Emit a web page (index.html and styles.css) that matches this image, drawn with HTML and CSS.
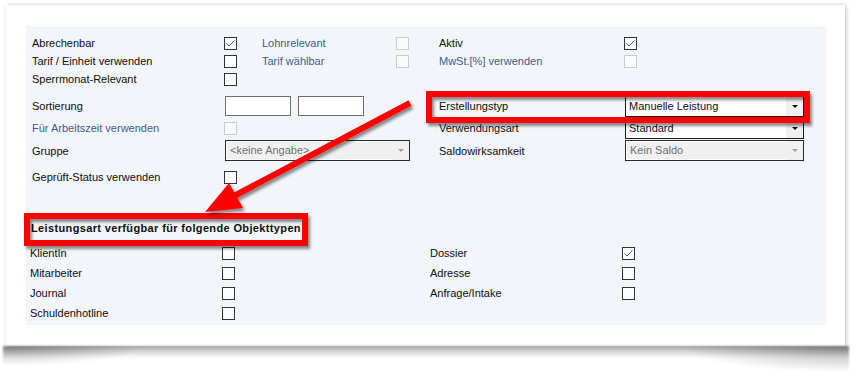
FILE: index.html
```html
<!DOCTYPE html>
<html lang="de">
<head>
<meta charset="utf-8">
<title>Leistungsart</title>
<link rel="stylesheet" href="styles.css">
</head>
<body>
<div class="card">
  <div class="panel">
    <div class="row h18 first">
      <span class="lbl">Abrechenbar</span>
      <span class="cb"><svg class="tick" viewBox="0 0 11 11"><polyline points="1.5,5.5 4,8 9.5,2.5"/></svg></span>
      <span class="lbl dim">Lohnrelevant</span>
      <span class="cb dis"></span>
      <span class="lbl">Aktiv</span>
      <span class="cb"><svg class="tick" viewBox="0 0 11 11"><polyline points="1.5,5.5 4,8 9.5,2.5"/></svg></span>
    </div>
    <div class="row h18">
      <span class="lbl">Tarif / Einheit verwenden</span>
      <span class="cb"></span>
      <span class="lbl dim">Tarif wählbar</span>
      <span class="cb dis"></span>
      <span class="lbl dim">MwSt.[%] verwenden</span>
      <span class="cb dis"></span>
    </div>
    <div class="row h18">
      <span class="lbl">Sperrmonat-Relevant</span>
      <span class="cb"></span>
    </div>
    <div class="row h22 mt7">
      <span class="lbl">Sortierung</span>
      <div class="inputs span-2-5">
        <span class="txt"></span>
        <span class="txt"></span>
      </div>
      <span class="lbl c5">Erstellungstyp</span>
      <div class="combo c6"><span class="val">Manuelle Leistung</span><span class="btn"></span></div>
    </div>
    <div class="row h22">
      <span class="lbl dim">Für Arbeitszeit verwenden</span>
      <span class="cb dis"></span>
      <span class="lbl c5">Verwendungsart</span>
      <div class="combo c6"><span class="val">Standard</span><span class="btn"></span></div>
    </div>
    <div class="row h23">
      <span class="lbl">Gruppe</span>
      <div class="combo off wide span-2-5"><span class="val">&lt;keine Angabe&gt;</span><span class="btn"></span></div>
      <span class="lbl c5">Saldowirksamkeit</span>
      <div class="combo off c6"><span class="val">Kein Saldo</span><span class="btn"></span></div>
    </div>
    <div class="row h30">
      <span class="lbl">Geprüft-Status verwenden</span>
      <span class="cb"></span>
    </div>

    <div class="title">Leistungsart verfügbar für folgende Objekttypen</div>

    <div class="brow bfirst">
      <span class="lbl">KlientIn</span>
      <span class="cb"></span>
      <span class="lbl">Dossier</span>
      <span class="cb"><svg class="tick" viewBox="0 0 11 11"><polyline points="1.5,5.5 4,8 9.5,2.5"/></svg></span>
    </div>
    <div class="brow">
      <span class="lbl">Mitarbeiter</span>
      <span class="cb"></span>
      <span class="lbl">Adresse</span>
      <span class="cb"></span>
    </div>
    <div class="brow">
      <span class="lbl">Journal</span>
      <span class="cb"></span>
      <span class="lbl">Anfrage/Intake</span>
      <span class="cb"></span>
    </div>
    <div class="brow">
      <span class="lbl">Schuldenhotline</span>
      <span class="cb"></span>
    </div>
  </div>
</div>

<svg class="annot" viewBox="0 0 859 375" width="859" height="375">
  <defs>
    <filter id="sh" x="-10%" y="-20%" width="130%" height="160%">
      <feDropShadow dx="2" dy="3" stdDeviation="1.6" flood-color="#000" flood-opacity="0.45"/>
    </filter>
  </defs>
  <g filter="url(#sh)" fill="none" stroke="#ff0000" stroke-width="6">
    <rect x="429" y="94" width="378" height="26"/>
    <rect x="27" y="216" width="278" height="27"/>
  </g>
  <g filter="url(#sh)">
    <line x1="410" y1="103" x2="234" y2="196" stroke="#ff0000" stroke-width="6"/>
    <polygon points="205,212 229,183 243,208" fill="#ff0000"/>
  </g>
</svg>
</body>
</html>
```

FILE: styles.css
```css
html, body {
  margin: 0;
}

body {
  position: relative;
  width: 859px;
  height: 375px;
  overflow: hidden;
  box-sizing: border-box;
  padding: 5px 0 0 6px;
  background: #ffffff;
  font-family: "Liberation Sans", Arial, sans-serif;
  font-size: 11px;
  color: #0e0e0e;
}

.card {
  position: relative;
  width: 839px;
  height: 341px;
  box-sizing: border-box;
  padding: 21px 0 0 20px;
  background: #ffffff;
  box-shadow: 0 0 3px rgba(0, 0, 0, 0.16), 2px 1px 4px rgba(0, 0, 0, 0.14);
}

.card::after {
  content: "";
  position: absolute;
  left: -3px;
  right: -4px;
  top: 100%;
  height: 26px;
  background:
    radial-gradient(ellipse 140px 20px at 0 0, rgba(0, 0, 0, 0.3), rgba(0, 0, 0, 0) 100%),
    radial-gradient(ellipse 170px 26px at 100% 0, rgba(0, 0, 0, 0.32), rgba(0, 0, 0, 0) 100%),
    linear-gradient(to bottom, rgba(0, 0, 0, 0.3), rgba(0, 0, 0, 0) 12px);
  filter: blur(1px);
}

.panel {
  width: 800px;
  height: 299px;
  box-sizing: border-box;
  padding-top: 8px;
  background: #f2f5f9;
}

.row {
  display: grid;
  grid-template-columns: 192px 38px 134px 43px 185px 180px;
  align-items: center;
  margin-left: 6px;
}

.h18 { height: 18px; }
.h22 { height: 22px; }
.h23 { height: 23px; }
.h30 { height: 30px; }
.mt7 { margin-top: 7px; }

.span-2-5 { grid-column: 2 / 5; }
.c5 { grid-column: 5; }
.c6 { grid-column: 6; }

.lbl {
  white-space: nowrap;
  line-height: 14px;
}

.dim {
  color: #3f5d8a;
}

.cb {
  width: 13px;
  height: 13px;
  box-sizing: border-box;
  border: 1px solid #333333;
  background: #ffffff;
  display: flex;
  align-items: center;
  justify-content: center;
}

.cb.dis {
  border-color: #cccccc;
  background: #fbfbfb;
}

.tick {
  width: 11px;
  height: 11px;
  fill: none;
  stroke: #555555;
  stroke-width: 1;
}

.inputs {
  display: flex;
  gap: 7px;
  margin-left: 1px;
}

.txt {
  width: 66px;
  height: 20px;
  box-sizing: border-box;
  border: 1px solid #6e6e6e;
  background: #ffffff;
}

.combo {
  width: 179px;
  height: 21px;
  margin-left: 1px;
  box-sizing: border-box;
  border: 1px solid #1a1a1a;
  background: #ffffff;
  display: flex;
  align-items: stretch;
  color: #0c0c1e;
}

.combo.wide {
  width: 185px;
}

.combo .val {
  flex: 1;
  padding-left: 3px;
  line-height: 19px;
  white-space: nowrap;
}

.combo .btn {
  width: 17px;
  background: #f0f0f0;
  display: flex;
  align-items: center;
  justify-content: center;
}

.combo .btn::after {
  content: "";
  border-left: 3px solid transparent;
  border-right: 3px solid transparent;
  border-top: 3px solid #111111;
}

.combo.off {
  background: #f0f0f0;
  border-color: #2a2a2a;
  color: #707070;
}

.combo.off .val {
  border: 1px solid #ffffff;
  border-right: 0;
  background: #f0f0f0;
  line-height: 17px;
}

.combo.off .btn::after {
  border-top-color: #a0a0a0;
}

.title {
  margin: 26px 0 0 5px;
  height: 20px;
  line-height: 20px;
  font-weight: bold;
  letter-spacing: 0.36px;
  white-space: nowrap;
}

.brow {
  display: grid;
  grid-template-columns: 192px 208px 192px 1fr;
  align-items: center;
  height: 20px;
  margin-left: 4px;
}

.bfirst {
  margin-top: 5px;
}

.annot {
  position: absolute;
  left: 0;
  top: 0;
  pointer-events: none;
}
```
